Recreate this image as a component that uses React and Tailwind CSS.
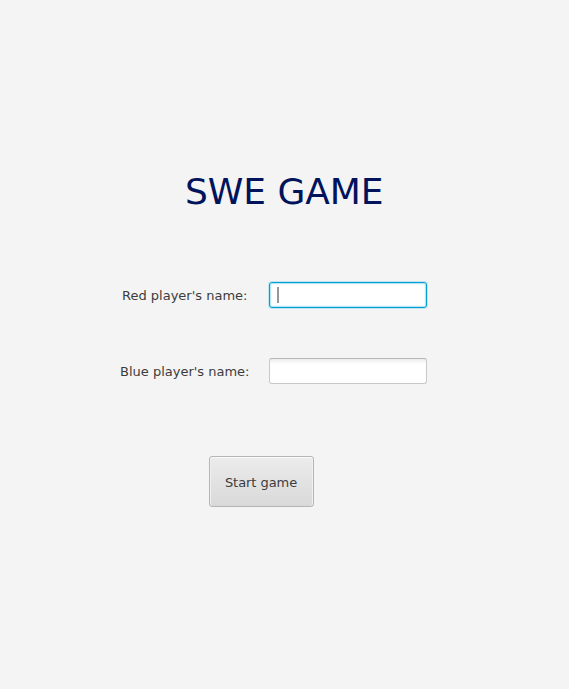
function Field({ label, focused, labelClass }) {
  return (
    <div className="flex h-[26px] items-center">
      <label className={`shrink-0 whitespace-nowrap pt-[2px] text-[13px] leading-[16px] text-[#3c3c3c] ${labelClass}`}>{label}</label>
      {focused ? (
        <div className="h-[26px] w-[158px] shrink-0 rounded-[3px] border border-[#039ed3] bg-white px-[7px] py-[4px] shadow-[inset_0_0_0_1px_#b5e6f5,inset_0_0_0_2px_#f2f9fc,0_0_0_1px_#c0e4f0]">
          <div className="h-[16px] w-[2px] bg-[#999999]" />
        </div>
      ) : (
        <div className="h-[26px] w-[158px] shrink-0 rounded-[3px] border border-[#c8c8c8] border-t-[#b5b5b5] bg-white bg-linear-to-b from-[#ececec] to-white to-[5px]" />
      )}
    </div>
  );
}

export default function App() {
  return (
    <main className="flex h-[689px] w-[569px] flex-col overflow-hidden bg-[#f4f4f4] font-['DejaVu_Sans',sans-serif]">
      <h1 className="mt-[171px] ml-[185px] text-[36px] leading-[42px] tracking-[-0.06px] whitespace-nowrap text-[#00135b]">SWE GAME</h1>
      <div className="mt-[69px] flex flex-col gap-[50px]">
        <Field label="Red player's name:" labelClass="w-[269px] pl-[122px]" focused />
        <Field label="Blue player's name:" labelClass="w-[269px] pl-[120px]" />
      </div>
      <button className="mt-[72px] ml-[209px] h-[51px] w-[105px] rounded-[3px] border border-[#b5b5b5] bg-linear-to-b from-[#ececec] to-[#d9d9d9] pt-[2px] pr-px text-[13px] tracking-[-0.06px] text-[#3c3c3c] shadow-[inset_0_1px_0_#fafafa,inset_1px_0_0_#f0f0f0,inset_-1px_0_0_#f0f0f0]">
        Start game
      </button>
    </main>
  );
}
